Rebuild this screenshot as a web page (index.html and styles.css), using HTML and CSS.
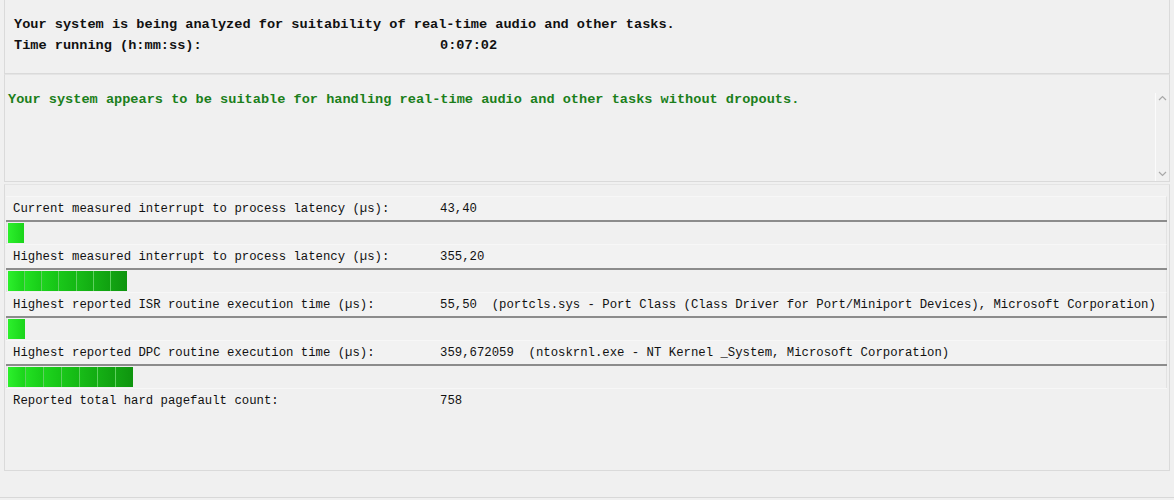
FILE: index.html
```html
<!DOCTYPE html>
<html>
<head>
<meta charset="utf-8">
<link rel="stylesheet" href="styles.css">
</head>
<body>
<div class="window">
  <div class="panel status">
    <div class="status-line">Your system is being analyzed for suitability of real-time audio and other tasks.</div>
    <div class="status-line"><span class="status-label">Time running (h:mm:ss):</span><span>0:07:02</span></div>
  </div>
  <div class="panel result">
    <div class="result-text">Your system appears to be suitable for handling real-time audio and other tasks without dropouts.</div>
    <div class="scrollbar">
      <svg class="chev" width="9" height="6" viewBox="0 0 9 6"><path d="M1 5 L4.5 1.5 L8 5" fill="none" stroke="#a8a8a8" stroke-width="1.2"/></svg>
      <svg class="chev" width="9" height="6" viewBox="0 0 9 6"><path d="M1 1 L4.5 4.5 L8 1" fill="none" stroke="#a8a8a8" stroke-width="1.2"/></svg>
    </div>
  </div>
  <div class="panel metrics">
    <div class="label-row"><span class="label">Current measured interrupt to process latency (µs):</span><span class="value">43,40</span></div>
    <div class="rule"></div>
    <div class="bar-row">
      <div class="bar" style="width:16px"><i class="seg s1"></i></div>
    </div>
    <div class="label-row"><span class="label">Highest measured interrupt to process latency (µs):</span><span class="value">355,20</span></div>
    <div class="rule"></div>
    <div class="bar-row">
      <div class="bar" style="width:119px"><i class="seg s1"></i><i class="seg s2"></i><i class="seg s3"></i><i class="seg s4"></i><i class="seg s5"></i><i class="seg s6"></i><i class="seg s7"></i></div>
    </div>
    <div class="label-row"><span class="label">Highest reported ISR routine execution time (µs):</span><span class="value">55,50  (portcls.sys - Port Class (Class Driver for Port/Miniport Devices), Microsoft Corporation)</span></div>
    <div class="rule"></div>
    <div class="bar-row">
      <div class="bar" style="width:17px"><i class="seg s1"></i></div>
    </div>
    <div class="label-row"><span class="label">Highest reported DPC routine execution time (µs):</span><span class="value">359,672059  (ntoskrnl.exe - NT Kernel _System, Microsoft Corporation)</span></div>
    <div class="rule"></div>
    <div class="bar-row">
      <div class="bar" style="width:125px"><i class="seg s1"></i><i class="seg s2"></i><i class="seg s3"></i><i class="seg s4"></i><i class="seg s5"></i><i class="seg s6"></i><i class="seg s7"></i></div>
    </div>
    <div class="label-row last"><span class="label">Reported total hard pagefault count:</span><span class="value">758</span></div>
  </div>
  <div class="footer"></div>
</div>
</body>
</html>
```
FILE: styles.css
```css
html, body {
  margin: 0;
  padding: 0;
  background: #f0f0f0;
}
body {
  width: 1174px;
  height: 500px;
  overflow: hidden;
  font-family: "Liberation Mono", "Courier New", monospace;
  color: #111;
}
.window {
  display: flex;
  flex-direction: column;
  margin-left: 4px;
  width: 1166px;
}
.panel {
  box-sizing: border-box;
  border: 1px solid #dadada;
  border-top: none;
  background: #f0f0f0;
}
.status {
  height: 74px;
  padding: 14px 0 0 9px;
}
.status-line {
  font-size: 13.6px;
  font-weight: bold;
  line-height: 21px;
  white-space: pre;
  display: flex;
}
.status-label {
  width: 426px;
  flex: none;
}
.result {
  border-top: 1px solid #e4e4e4;
  height: 108px;
  padding: 14px 0 0 3px;
  display: flex;
  justify-content: space-between;
}
.result-text {
  font-size: 13.6px;
  font-weight: bold;
  line-height: 21px;
  color: #1b7f1b;
  white-space: pre;
}
.scrollbar {
  width: 12px;
  margin-top: 4px;
  margin-right: 1px;
  border-left: 1px solid #fbfbfb;
  display: flex;
  flex-direction: column;
  justify-content: space-between;
  align-items: center;
  padding: 2px 0 4px;
}
.chev {
  display: block;
}
.metrics {
  margin-top: 2px;
  border-top: 1px solid #e4e4e4;
  height: 287px;
  padding: 11px 2px 0 1px;
  display: flex;
  flex-direction: column;
}
.label-row {
  height: 24px;
  box-sizing: border-box;
  display: flex;
  align-items: center;
  padding-left: 7px;
  font-size: 12.3px;
  white-space: pre;
  background: #f2f2f2;
  border-top: 1px solid #f7f7f7;
  border-right: 1px solid #e2e2e2;
}
.label-row.last {
  background: #f0f0f0;
  border-right: none;
}
.label {
  width: 427px;
  flex: none;
}
.rule {
  height: 2px;
  background: #8c8c8c;
}
.bar-row {
  height: 22px;
  box-sizing: border-box;
  padding: 1px 0 1px 1px;
  border-left: 1px solid #e2e2e2;
  border-right: 1px solid #e2e2e2;
  display: flex;
}
.bar {
  display: flex;
  height: 20px;
}
.seg {
  flex: 1;
  box-sizing: border-box;
  border-right: 1px solid #5fd05f;
}
.seg:last-child {
  border-right: none;
}
.s1 { background: linear-gradient(90deg, #2cf02c, #1ad41a); }
.s2 { background: linear-gradient(90deg, #22e022, #18cc18); }
.s3 { background: linear-gradient(90deg, #1ed41e, #16c416); }
.s4 { background: linear-gradient(90deg, #1ac81a, #14b814); }
.s5 { background: linear-gradient(90deg, #18bc18, #12ac12); }
.s6 { background: linear-gradient(90deg, #15b015, #10a010); }
.s7 { background: linear-gradient(90deg, #13a413, #0e940e); }
.footer {
  margin-left: -4px;
  width: 1174px;
  height: 26px;
  border-bottom: 1px solid #d8d8d8;
}
```
